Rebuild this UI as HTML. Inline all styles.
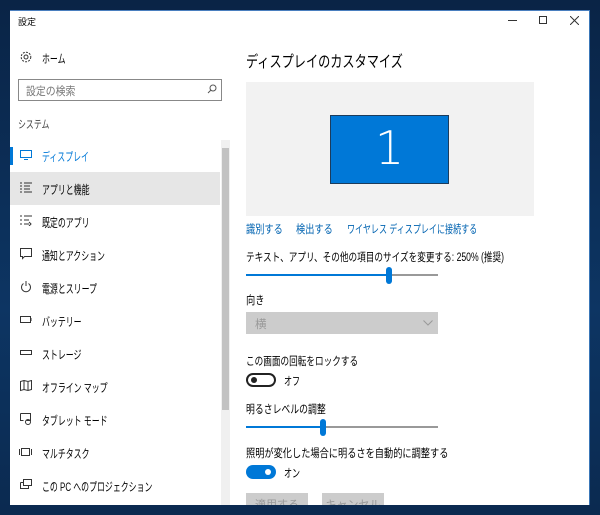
<!DOCTYPE html>
<html><head><meta charset="utf-8"><style>
*{margin:0;padding:0;box-sizing:border-box}
body{width:600px;height:515px;background:linear-gradient(180deg,#0a2446,#0d3563 60%,#0b2a50);position:relative;overflow:hidden;font-family:"Liberation Sans","Noto Sans CJK JP",sans-serif;color:#000}
.win{position:absolute;left:10px;top:10px;width:580px;height:495px;background:#fff;border-right:1px solid #3a77b8;border-top:1px solid #4a7fbf}
.a{position:absolute;white-space:nowrap;transform-origin:0 0}
.t{font-size:12px;transform:scaleX(0.66)}
</style></head><body>
<div class="win"></div>
<div class="a" style="left:18px;top:15px;font-size:9px">設定</div>
<div class="a" style="left:508px;top:20px;width:9px;height:1px;background:#333"></div>
<div class="a" style="left:539px;top:16px;width:8px;height:8px;border:1px solid #333"></div>
<svg class="a" style="left:570px;top:16px" width="9" height="9"><path d="M0 0L9 9M9 0L0 9" stroke="#333"/></svg>
<svg class="a" style="left:20px;top:51px" width="12" height="12" viewBox="0 0 12 12"><circle cx="6" cy="6" r="2" fill="none" stroke="#333"/><circle cx="6" cy="6" r="4.8" fill="none" stroke="#333" stroke-dasharray="2 1.2"/></svg>
<div class="a t" style="left:42px;top:50px">ホーム</div>
<div class="a" style="left:18px;top:79px;width:204px;height:22px;border:1px solid #888"></div>
<div class="a" style="left:26px;top:83px;font-size:11.5px;color:#777;transform:scaleX(0.86)">設定の検索</div>
<svg class="a" style="left:207px;top:84px" width="10" height="10"><circle cx="6" cy="4" r="3" fill="none" stroke="#555"/><path d="M4 6L1 9" stroke="#555"/></svg>
<div class="a" style="left:18px;top:116px;font-size:11px;color:#444;transform:scaleX(0.72)">システム</div>
<div class="a" style="left:10px;top:147px;width:3px;height:18px;background:#0078d7"></div>
<div class="a" style="left:10px;top:172px;width:210px;height:33px;background:#e6e6e6"></div>
<div class="a" style="left:221px;top:140px;width:9px;height:365px;background:#f0f0f0"></div>
<div class="a" style="left:222px;top:148px;width:7px;height:262px;background:#c2c2c2"></div>
<svg class="a" style="left:20px;top:150px" width="12" height="10"><rect x="0.5" y="0.5" width="11" height="7" fill="none" stroke="#0078d7"/><path d="M4 9.5h4" stroke="#0078d7"/></svg>
<div class="a t" style="left:42px;top:148px;color:#0078d7">ディスプレイ</div>
<svg class="a" style="left:20px;top:182px" width="12" height="11"><path d="M0 1h2M0 4h2M0 7h2M0 10h2M4 1h8M4 4h6M4 7h6M4 10h8" stroke="#333"/></svg>
<div class="a t" style="left:42px;top:181px">アプリと機能</div>
<svg class="a" style="left:20px;top:215px" width="12" height="11"><path d="M0 1h2M0 5h2M0 9h2M4 1h8M4 5h5M4 9h5M9 7l2 2-2 2" stroke="#333" fill="none"/></svg>
<div class="a t" style="left:42px;top:214px">既定のアプリ</div>
<svg class="a" style="left:20px;top:248px" width="12" height="12"><path d="M0.5 0.5h11v8h-7l-2 2v-2h-2z" fill="none" stroke="#333"/></svg>
<div class="a t" style="left:42px;top:247px">通知とアクション</div>
<svg class="a" style="left:20px;top:281px" width="12" height="12"><path d="M3.5 2.5A4.5 4.5 0 1 0 8.5 2.5M6 0v5" fill="none" stroke="#333"/></svg>
<div class="a t" style="left:42px;top:280px">電源とスリープ</div>
<svg class="a" style="left:20px;top:316px" width="12" height="7"><rect x="0.5" y="0.5" width="10" height="6" fill="none" stroke="#333"/><path d="M11 2v3" stroke="#333"/></svg>
<div class="a t" style="left:42px;top:313px">バッテリー</div>
<svg class="a" style="left:20px;top:350px" width="12" height="6"><rect x="0.5" y="0.5" width="11" height="4" fill="none" stroke="#333"/></svg>
<div class="a t" style="left:42px;top:346px">ストレージ</div>
<svg class="a" style="left:20px;top:380px" width="12" height="12"><path d="M0.5 1.5l3.5-1 4 1 3.5-1v9l-3.5 1-4-1-3.5 1zM4 0.5v9M8 1.5v9" fill="none" stroke="#333"/></svg>
<div class="a t" style="left:42px;top:379px">オフライン マップ</div>
<svg class="a" style="left:20px;top:413px" width="12" height="12"><path d="M0.5 0.5h10v7h-4M0.5 0.5v7h3" fill="none" stroke="#333"/><circle cx="8" cy="9" r="2.5" fill="none" stroke="#333"/></svg>
<div class="a t" style="left:42px;top:412px">タブレット モード</div>
<svg class="a" style="left:19px;top:448px" width="13" height="8"><rect x="2.5" y="0.5" width="8" height="7" fill="none" stroke="#333"/><path d="M0.5 1v6M12.5 1v6" stroke="#333"/></svg>
<div class="a t" style="left:42px;top:445px">マルチタスク</div>
<svg class="a" style="left:20px;top:479px" width="12" height="11"><path d="M3.5 0.5h8v6h-8zM0.5 3.5h3M0.5 3.5v6h8v-3" fill="none" stroke="#333"/></svg>
<div class="a t" style="left:42px;top:478px">この PC へのプロジェクション</div>
<div class="a" style="left:246px;top:48px;font-size:16px;transform:scaleX(0.76)">ディスプレイのカスタマイズ</div>
<div class="a" style="left:246px;top:82px;width:288px;height:134px;background:#f2f2f2"></div>
<div class="a" style="left:330px;top:115px;width:119px;height:69px;background:#0078d7;border:1px solid #1c3c5c"></div>
<div class="a" style="left:330px;top:121px;width:119px;text-align:center;color:#fff;font-size:46px;line-height:54px;font-family:'DejaVu Sans',sans-serif;font-weight:200">1</div>
<div class="a" style="left:246px;top:221px;font-size:11.5px;color:#0063b1;transform:scaleX(0.8)">識別する</div>
<div class="a" style="left:296px;top:221px;font-size:11.5px;color:#0063b1;transform:scaleX(0.8)">検出する</div>
<div class="a" style="left:347px;top:221px;font-size:11.5px;color:#0063b1;transform:scaleX(0.7)">ワイヤレス ディスプレイに接続する</div>
<div class="a" style="left:246px;top:249px;font-size:11.5px;transform:scaleX(0.75)">テキスト、アプリ、その他の項目のサイズを変更する: 250% (推奨)</div>
<div class="a" style="left:246px;top:274px;width:192px;height:2px;background:#999"></div>
<div class="a" style="left:246px;top:274px;width:143px;height:2px;background:#0078d7"></div>
<div class="a" style="left:386px;top:267px;width:6px;height:17px;border-radius:3px;background:#0078d7"></div>
<div class="a" style="left:246px;top:292px;font-size:11.5px;transform:scaleX(0.8)">向き</div>
<div class="a" style="left:246px;top:312px;width:192px;height:22px;background:#ccc"></div>
<div class="a" style="left:255px;top:316px;font-size:11.5px;color:#999">横</div>
<svg class="a" style="left:423px;top:320px" width="10" height="6"><path d="M0.5 0.5l4.5 4.5 4.5-4.5" fill="none" stroke="#999"/></svg>
<div class="a" style="left:246px;top:353px;font-size:11.5px;transform:scaleX(0.75)">この画面の回転をロックする</div>
<div class="a" style="left:246px;top:373px;width:30px;height:14px;border:2px solid #222;border-radius:7px"></div>
<div class="a" style="left:251px;top:377px;width:6px;height:6px;border-radius:3px;background:#222"></div>
<div class="a" style="left:284px;top:373px;font-size:11.5px;transform:scaleX(0.7)">オフ</div>
<div class="a" style="left:246px;top:401px;font-size:11.5px;transform:scaleX(0.77)">明るさレベルの調整</div>
<div class="a" style="left:246px;top:426px;width:192px;height:2px;background:#999"></div>
<div class="a" style="left:246px;top:426px;width:77px;height:2px;background:#0078d7"></div>
<div class="a" style="left:320px;top:419px;width:6px;height:17px;border-radius:3px;background:#0078d7"></div>
<div class="a" style="left:246px;top:445px;font-size:11.5px;transform:scaleX(0.8)">照明が変化した場合に明るさを自動的に調整する</div>
<div class="a" style="left:246px;top:465px;width:30px;height:14px;background:#0078d7;border-radius:7px"></div>
<div class="a" style="left:265px;top:469px;width:6px;height:6px;border-radius:3px;background:#fff"></div>
<div class="a" style="left:284px;top:465px;font-size:11.5px;transform:scaleX(0.7)">オン</div>
<div class="a" style="left:246px;top:493px;width:62px;height:12px;background:#ccc;overflow:hidden"><div style="text-align:center;font-size:11px;color:#999;padding-top:3px">適用する</div></div>
<div class="a" style="left:322px;top:493px;width:62px;height:12px;background:#ccc;overflow:hidden"><div style="text-align:center;font-size:11px;color:#999;padding-top:3px">キャンセル</div></div>
</body></html>
